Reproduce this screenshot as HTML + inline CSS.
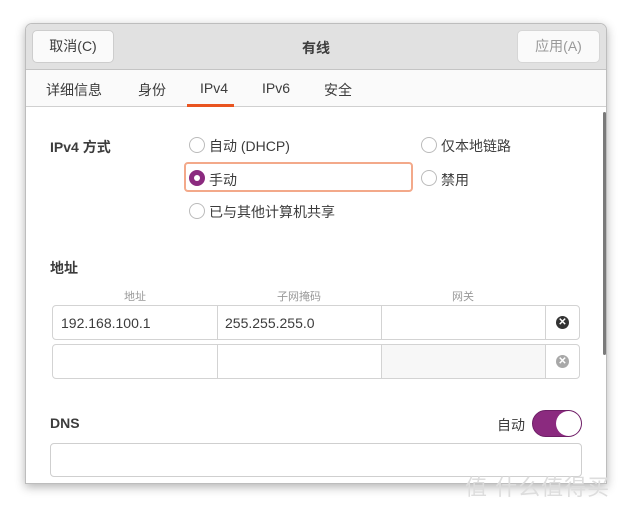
<!DOCTYPE html>
<html><head><meta charset="utf-8"><style>
*{box-sizing:border-box;margin:0;padding:0}
body{width:632px;height:513px;background:#fff;position:relative;overflow:hidden;font-family:"Liberation Sans","Noto Sans CJK SC",sans-serif;font-size:14px;color:#3c3c3c}
.a{position:absolute}
.win{left:25px;top:23px;width:582px;height:461px;border:1px solid #bdbdbd;border-radius:7px 7px 0 0;overflow:hidden;box-shadow:0 3px 10px rgba(0,0,0,.3);background:#fff}
.hdr{left:0;top:0;width:580px;height:46px;background:#e1e1e1;border-bottom:1px solid #c4c4c4}
.btn{top:6px;height:33px;border:1px solid #cdcdcd;border-radius:5px;background:#fafafa;font-size:14px;line-height:31px;text-align:center}
.tabs{left:0;top:46px;width:580px;height:37px;background:#fafafa;border-bottom:1px solid #d0d0d0}
.tab{top:10px;font-size:14px}
.radio{width:16px;height:16px;border:1px solid #bbb;border-radius:50%;background:#fff}
.cell{height:33px;border:1px solid #d3d3d3;background:#fff}
.x{width:13px;height:13px;border-radius:50%;color:#fff;font-size:10px;line-height:13px;text-align:center;font-weight:bold}
</style></head><body>
<div class="a win">
 <div class="a hdr">
  <div class="a btn" style="left:6px;width:82px">取消(C)</div>
  <div class="a" style="left:0;width:580px;top:14px;text-align:center;font-weight:bold">有线</div>
  <div class="a btn" style="left:491px;width:83px;color:#999;border-color:#d6d6d6">应用(A)</div>
 </div>
 <div class="a tabs">
  <div class="a tab" style="left:20px">详细信息</div>
  <div class="a tab" style="left:112px">身份</div>
  <div class="a tab" style="left:174px">IPv4</div>
  <div class="a tab" style="left:236px">IPv6</div>
  <div class="a tab" style="left:298px">安全</div>
  <div class="a" style="left:161px;top:34px;width:47px;height:3px;background:#e95420"></div>
 </div>
 <div class="a" style="left:577px;top:88px;width:3px;height:243px;background:#7a7a7a;border-radius:2px"></div>
 <div class="a" style="left:24px;top:113px;font-weight:bold">IPv4 方式</div>
 <div class="a radio" style="left:163px;top:113px"></div><div class="a" style="left:183px;top:112px">自动 (DHCP)</div>
 <div class="a radio" style="left:395px;top:113px"></div><div class="a" style="left:415px;top:112px">仅本地链路</div>
 <div class="a" style="left:158px;top:138px;width:229px;height:30px;border:2px solid #f3a98a;border-radius:4px"></div>
 <div class="a radio" style="left:163px;top:146px;background:#8b2a7f;border-color:#8b2a7f"><div class="a" style="left:4px;top:4px;width:6px;height:6px;border-radius:50%;background:#fff"></div></div>
 <div class="a" style="left:183px;top:146px">手动</div>
 <div class="a radio" style="left:395px;top:146px"></div><div class="a" style="left:415px;top:146px">禁用</div>
 <div class="a radio" style="left:163px;top:179px"></div><div class="a" style="left:183px;top:178px">已与其他计算机共享</div>
 <div class="a" style="left:24px;top:234px;font-weight:bold">地址</div>
 <div class="a" style="left:27px;top:264px;width:164px;text-align:center;font-size:11px;color:#999">地址</div>
 <div class="a" style="left:191px;top:264px;width:164px;text-align:center;font-size:11px;color:#999">子网掩码</div>
 <div class="a" style="left:355px;top:264px;width:164px;text-align:center;font-size:11px;color:#999">网关</div>
 <div class="a" style="left:26px;top:281px;width:528px;height:35px;border:1px solid #d3d3d3;border-radius:4px"></div>
 <div class="a" style="left:191px;top:282px;width:1px;height:33px;background:#d3d3d3"></div>
 <div class="a" style="left:355px;top:282px;width:1px;height:33px;background:#d3d3d3"></div>
 <div class="a" style="left:519px;top:282px;width:1px;height:33px;background:#d3d3d3"></div>
 <div class="a" style="left:35px;top:291px">192.168.100.1</div>
 <div class="a" style="left:199px;top:291px">255.255.255.0</div>
 <div class="a x" style="left:530px;top:292px;background:#333">✕</div>
 <div class="a" style="left:26px;top:320px;width:528px;height:35px;border:1px solid #d3d3d3;border-radius:4px"></div>
 <div class="a" style="left:356px;top:321px;width:163px;height:33px;background:#f7f7f7"></div>
 <div class="a" style="left:191px;top:321px;width:1px;height:33px;background:#d3d3d3"></div>
 <div class="a" style="left:355px;top:321px;width:1px;height:33px;background:#d3d3d3"></div>
 <div class="a" style="left:519px;top:321px;width:1px;height:33px;background:#d3d3d3"></div>
 <div class="a x" style="left:530px;top:331px;background:#a8a8a8">✕</div>
 <div class="a" style="left:24px;top:391px;font-weight:bold">DNS</div>
 <div class="a" style="left:471px;top:391px">自动</div>
 <div class="a" style="left:506px;top:386px;width:50px;height:27px;border-radius:14px;background:#8b2a7f;border:1px solid #6e1f66"><div class="a" style="left:23px;top:0;width:25px;height:25px;border-radius:50%;background:#fff"></div></div>
 <div class="a" style="left:24px;top:419px;width:532px;height:34px;border:1px solid #cfcfcf;border-radius:4px"></div>
</div>
<div class="a" style="left:465px;top:470px;color:#ddd;font-size:22px;letter-spacing:1px">值 什么值得买</div>
</body></html>
